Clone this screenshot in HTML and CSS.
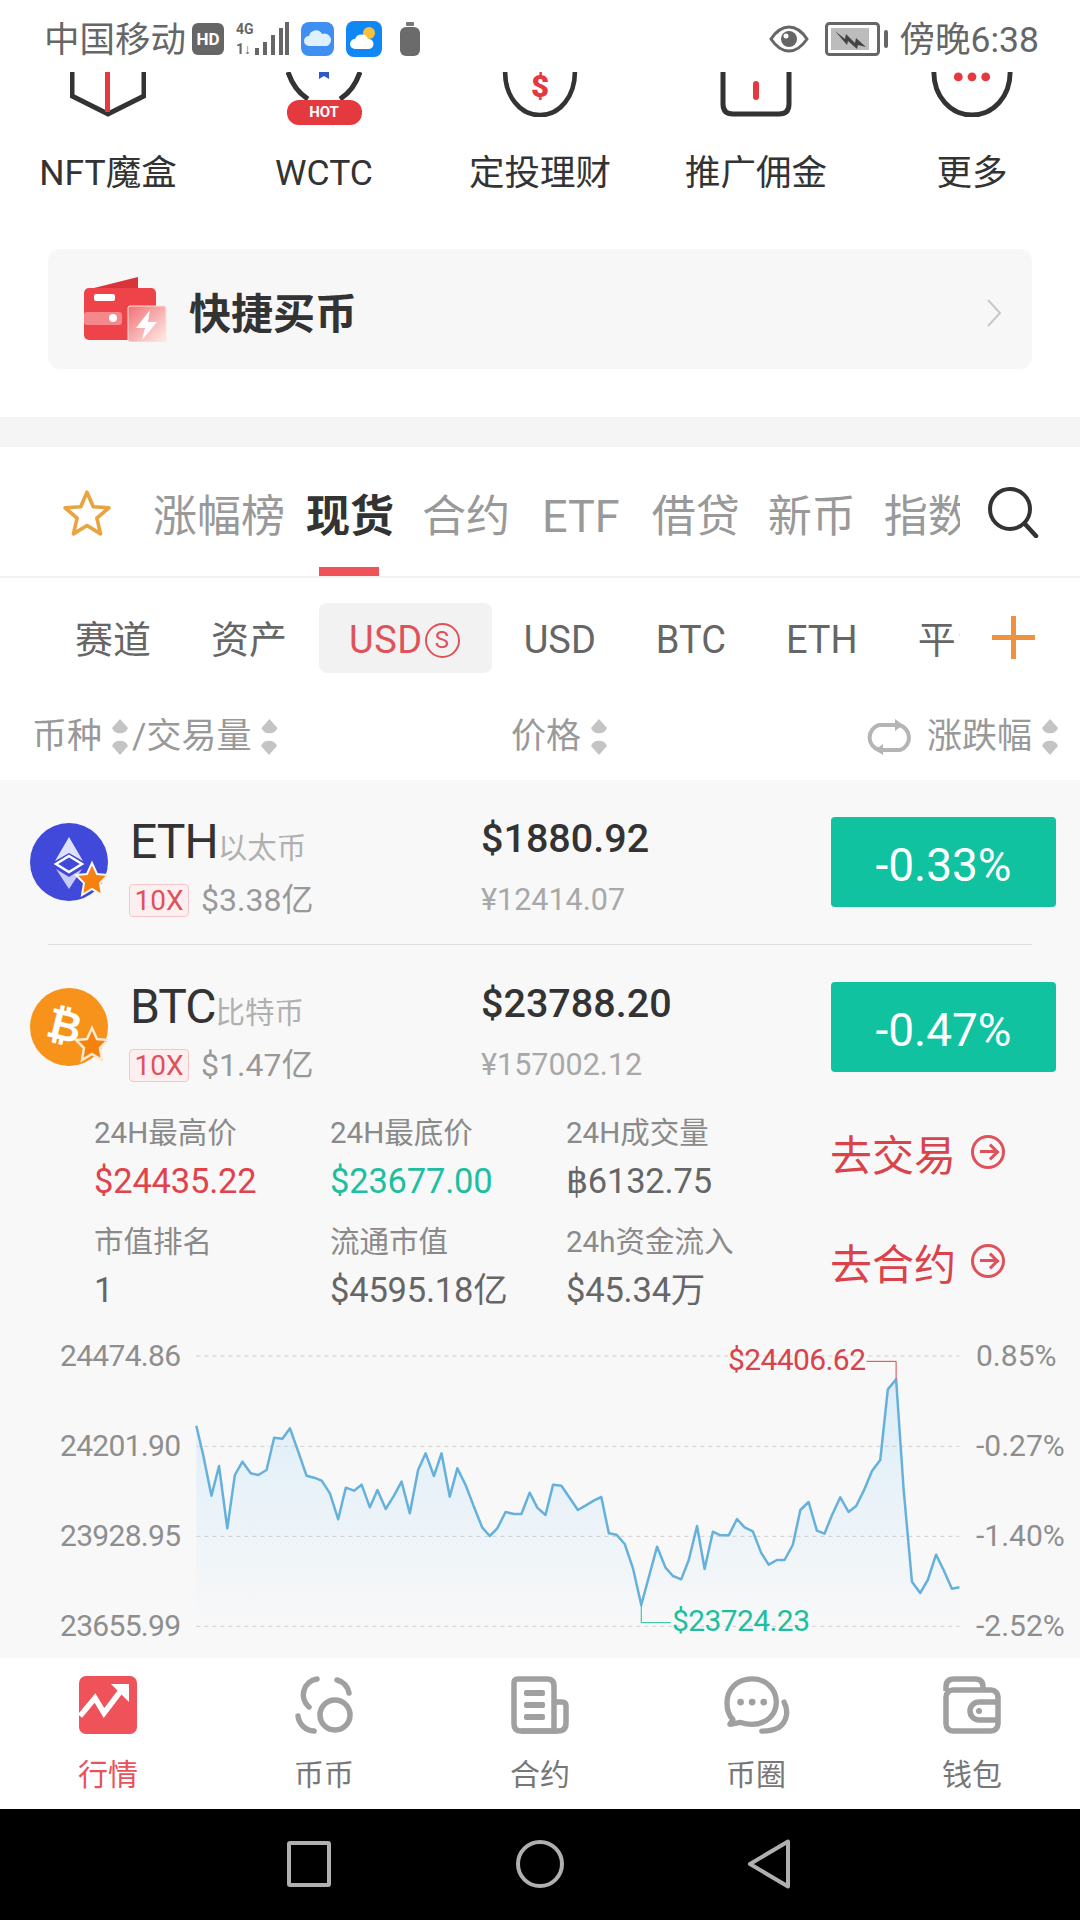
FILE: index.html
```html
<!DOCTYPE html>
<html lang="zh-CN">
<head>
  <meta charset="UTF-8" />
  <meta name="viewport" content="width=device-width, initial-scale=1.0" />
  <title>行情</title>
  <link rel="stylesheet" href="styles.css">
</head>
<body>
  <!-- Status bar -->
  <header class="statusbar">
    <div class="status-left">
      <span class="carrier">中国移动</span>
      <span class="hd">HD</span>
      <svg class="signal" width="54" height="36" viewBox="0 0 54 36">
        <text x="1" y="13" class="sig-text">4G</text>
        <text x="1" y="33" class="sig-text">1↓</text>
        <rect x="20" y="27" width="4" height="7" fill="#666"/>
        <rect x="28" y="21" width="4" height="13" fill="#666"/>
        <rect x="36" y="14" width="4" height="20" fill="#666"/>
        <rect x="44" y="7" width="4" height="27" fill="#666"/>
        <rect x="50" y="1" width="4" height="33" fill="#666"/>
      </svg>
      <svg class="app-icon" width="33" height="34" viewBox="0 0 33 34">
        <rect width="33" height="34" rx="8" fill="#3f8ff2"/>
        <path d="M8 24a5 5 0 0 1 0-10 7 7 0 0 1 13-2 6 6 0 0 1 5 12z" fill="#dff0ff"/>
      </svg>
      <svg class="app-icon" width="36" height="36" viewBox="0 0 36 36">
        <rect width="36" height="36" rx="8" fill="#0f87f5"/>
        <circle cx="23" cy="12" r="6" fill="#f7c23a"/>
        <path d="M9 28a5 5 0 0 1 0-10 7 7 0 0 1 13 0 5 5 0 0 1 1 10z" fill="#fff"/>
      </svg>
      <svg class="app-icon" width="20" height="34" viewBox="0 0 20 34">
        <rect x="6" y="0" width="8" height="4" rx="1" fill="#777"/>
        <rect x="0" y="5" width="20" height="29" rx="6" fill="#6b6b6b"/>
      </svg>
    </div>
    <div class="status-right">
      <svg width="40" height="30" viewBox="0 0 40 30">
        <path d="M2 15C8 6 14 3 20 3s12 3 18 12c-6 9-12 12-18 12S8 24 2 15z" fill="none" stroke="#666" stroke-width="3"/>
        <circle cx="20" cy="15" r="8" fill="#666"/>
        <circle cx="17" cy="12" r="2.500" fill="#fff"/>
      </svg>
      <svg width="64" height="34" viewBox="0 0 64 34">
        <rect x="1.500" y="1.500" width="52" height="31" rx="3" fill="none" stroke="#666" stroke-width="3"/>
        <rect x="6" y="6" width="38" height="22" fill="#bcbcbc"/>
        <path d="M10 9l10 8 1-5 9 9 1-5 10 9-8-2-1 4-9-8-1 4z" fill="#444"/>
        <rect x="59" y="8" width="4" height="18" rx="2" fill="#666"/>
      </svg>
      <span class="clock">傍晚6:38</span>
    </div>
  </header>

  <!-- Shortcut grid, scrolled partly under the status bar -->
  <section class="shortcuts">
    <div class="shortcut">
      <svg width="76" height="45" viewBox="0 0 76 45">
        <path d="M2 0V24L38 42 74 24V0" fill="none" stroke="#333" stroke-width="5"/>
        <rect x="35" y="0" width="5" height="40" fill="#e4393f"/>
      </svg>
      <span>NFT魔盒</span>
    </div>
    <div class="shortcut">
      <div class="wctc-icon">
        <svg width="76" height="28" viewBox="0 0 76 28">
          <path d="M2 0C6 12 14 22 22 27M74 0C70 12 62 22 54 27" fill="none" stroke="#333" stroke-width="5"/>
          <path d="M33 0H43L43 7 38 4 33 7z" fill="#2f58c9"/>
        </svg>
        <b class="hot">HOT</b>
      </div>
      <span>WCTC</span>
    </div>
    <div class="shortcut">
      <svg width="80" height="49" viewBox="0 0 80 49">
        <path d="M2 0C2 26 18 47 40 47S78 26 78 0" fill="none" stroke="#333" stroke-width="5"/>
        <text x="40" y="27" class="dollar">$</text>
      </svg>
      <span>定投理财</span>
    </div>
    <div class="shortcut">
      <svg width="72" height="45" viewBox="0 0 72 45">
        <path d="M3 0V32Q3 42 13 42H59Q69 42 69 32V0" fill="none" stroke="#333" stroke-width="5"/>
        <rect x="33" y="9" width="6" height="19" rx="3" fill="#e4393f"/>
      </svg>
      <span>推广佣金</span>
    </div>
    <div class="shortcut">
      <svg width="84" height="46" viewBox="0 0 84 46">
        <path d="M3 0C3 25 20 44 42 44S81 25 81 0" fill="none" stroke="#333" stroke-width="5"/>
        <circle cx="28" cy="5" r="4.500" fill="#e4393f"/>
        <circle cx="42" cy="5" r="4.500" fill="#e4393f"/>
        <circle cx="56" cy="5" r="4.500" fill="#e4393f"/>
      </svg>
      <span>更多</span>
    </div>
  </section>

  <!-- Quick buy card -->
  <section class="quick-wrap">
    <div class="quick-card">
      <svg width="84" height="66" viewBox="0 0 84 66">
        <defs>
          <linearGradient id="tile" x1="0" y1="0" x2="1" y2="1">
            <stop offset="0" stop-color="#f27075"/>
            <stop offset="1" stop-color="#fdeeea"/>
          </linearGradient>
        </defs>
        <path d="M2 14L54 1V14z" fill="#d9343c"/>
        <rect x="0" y="12" width="72" height="52" rx="5" fill="#ee4449"/>
        <rect x="10" y="18" width="21" height="7" rx="2" fill="#fff"/>
        <rect x="0" y="36" width="38" height="13" rx="3" fill="#f5888b"/>
        <circle cx="29" cy="42" r="4" fill="#fff"/>
        <rect x="44" y="30" width="38" height="36" rx="2" fill="url(#tile)" stroke="#fbe3d6"/>
        <path d="M66 34L52 52H61L58 64 73 46H64z" fill="#fff"/>
      </svg>
      <span class="quick-title">快捷买币</span>
      <svg class="chev" width="16" height="30" viewBox="0 0 16 30">
        <path d="M2 2L14 15 2 28" fill="none" stroke="#c8c8c8" stroke-width="2"/>
      </svg>
    </div>
  </section>

  <div class="gap-bar"></div>

  <!-- Market tabs -->
  <nav class="market-tabs">
    <svg class="tab-star" width="50" height="50" viewBox="0 0 48 48">
      <path d="M24 4l6 14 15 1-11.500 10 3.500 15-13-8-13 8 3.500-15L3 19l15-1z" fill="none" stroke="#e9a33f" stroke-width="3.500" stroke-linejoin="round"/>
    </svg>
    <div class="tab-scroll">
      <span class="tab first">涨幅榜</span>
      <span class="tab active">现货</span>
      <span class="tab">合约</span>
      <span class="tab latin">ETF</span>
      <span class="tab">借贷</span>
      <span class="tab">新币</span>
      <span class="tab">指数</span>
    </div>
    <svg class="search" width="52" height="52" viewBox="0 0 52 52">
      <circle cx="23" cy="23" r="20" fill="none" stroke="#333" stroke-width="4"/>
      <path d="M38 38l11 12" stroke="#333" stroke-width="4.500" stroke-linecap="round"/>
    </svg>
  </nav>

  <!-- Quote currency chips -->
  <div class="chips">
    <div class="chip-scroll">
      <span class="chip">赛道</span>
      <span class="chip">资产</span>
      <span class="chip selected">USD<i class="circled">S</i></span>
      <span class="chip">USD</span>
      <span class="chip">BTC</span>
      <span class="chip">ETH</span>
      <span class="chip">平台</span>
    </div>
    <span class="plus"></span>
  </div>

  <!-- Column headers -->
  <div class="col-head">
    <div class="col-a">币种<i class="sort"></i>/交易量<i class="sort"></i></div>
    <div class="col-b">价格<i class="sort"></i></div>
    <div class="col-c">
      <svg width="48" height="36" viewBox="0 0 48 36">
        <path d="M15 31H14A13 13 0 0 1 14 6H33M34 6A13 13 0 0 1 35 31H18" fill="none" stroke="#b5b5b5" stroke-width="4"/>
        <path d="M30 0l8 6-8 6zM18 25l-8 6 8 5z" fill="#b5b5b5"/>
      </svg>
      涨跌幅<i class="sort"></i>
    </div>
  </div>

  <!-- Coin list -->
  <section class="list">
    <div class="coin-row">
      <div class="coin-icon">
        <svg width="78" height="78" viewBox="0 0 78 78">
          <circle cx="39" cy="39" r="39" fill="#4049d9"/>
          <path d="M39 14L53 38 39 30 25 38z" fill="#dfe2ff"/>
          <path d="M39 33L52 41 39 49 26 41z" fill="none" stroke="#fff" stroke-width="2.500"/>
          <path d="M26 46L39 54 52 46 39 66z" fill="#c6cbfb"/>
          <path d="M62 40l5 11 11 1-8 8 2 12-10-6-10 6 2-12-8-8 11-1z" fill="#f5810f" stroke="#f8f8f8" stroke-width="2"/>
        </svg>
      </div>
      <div class="coin-name">
        <div class="sym">ETH<small>以太币</small></div>
        <div class="vol"><b class="lev">10X</b>$3.38亿</div>
      </div>
      <div class="coin-price">
        <div class="usd">$1880.92</div>
        <div class="cny">¥12414.07</div>
      </div>
      <div class="change">-0.33%</div>
    </div>

    <div class="coin-row no-line">
      <div class="coin-icon">
        <svg width="78" height="78" viewBox="0 0 78 78">
          <circle cx="39" cy="39" r="39" fill="#f7931a"/>
          <text x="34" y="52" class="btc-mark" transform="rotate(14 34 40)">₿</text>
          <path d="M62 40l5 11 11 1-8 8 2 12-10-6-10 6 2-12-8-8 11-1z" fill="#f5810f" stroke="#fde9d0" stroke-width="2.500"/>
        </svg>
      </div>
      <div class="coin-name">
        <div class="sym">BTC<small>比特币</small></div>
        <div class="vol"><b class="lev">10X</b>$1.47亿</div>
      </div>
      <div class="coin-price">
        <div class="usd">$23788.20</div>
        <div class="cny">¥157002.12</div>
      </div>
      <div class="change">-0.47%</div>
    </div>

    <!-- Expanded BTC stats -->
    <div class="stats">
      <div class="stat"><label>24H最高价</label><span class="up">$24435.22</span></div>
      <div class="stat"><label>24H最底价</label><span class="down">$23677.00</span></div>
      <div class="stat"><label>24H成交量</label><span>฿6132.75</span></div>
      <a class="go">去交易<i class="go-arrow"></i></a>
      <div class="stat"><label>市值排名</label><span>1</span></div>
      <div class="stat"><label>流通市值</label><span>$4595.18亿</span></div>
      <div class="stat"><label>24h资金流入</label><span>$45.34万</span></div>
      <a class="go">去合约<i class="go-arrow"></i></a>
    </div>

    <!-- Price chart -->
    <div class="chart">
      <svg class="chart-svg" viewBox="0 0 1568 1020" preserveAspectRatio="none">
        <defs>
          <linearGradient id="area" x1="0" y1="0" x2="0" y2="1">
            <stop offset="0" stop-color="#dcedf8"/>
            <stop offset="1" stop-color="#f8f8f8"/>
          </linearGradient>
        </defs>
        <path class="area" d="M285 287L295 375 307 497 318 408 330 595 341 435 352 395 364 430 375 435 387 420 398 323 410 326 421 295 433 365 445 437 456 443 467 452 479 490 491 568 502 473 514 482 525 464 537 532 548 480 560 537 572 497 583 455 595 550 607 420 618 370 630 438 641 370 653 500 664 415 676 465 688 530 700 592 711 618 722 595 734 546 746 552 757 552 769 488 780 533 792 555 803 464 815 467 827 503 839 540 850 527 862 512 873 501 884 610 895 614 907 642 919 715 931 825 954 650 966 712 977 738 989 748 1000 690 1012 588 1023 717 1035 605 1046 616 1058 616 1070 567 1081 592 1093 604 1105 668 1116 704 1128 690 1139 690 1151 645 1162 540 1174 516 1186 602 1197 611 1208 555 1220 502 1232 546 1243 528 1255 478 1266 423 1278 390 1289 178 1301 148 1312 480 1324 755 1336 789 1347 750 1359 674 1370 720 1382 776 1393 772V890H285z"/>
        <path class="grid" d="M285 78H1393M285 349H1393M285 619H1393M285 889H1393"/>
        <path class="line" d="M285 287L295 375 307 497 318 408 330 595 341 435 352 395 364 430 375 435 387 420 398 323 410 326 421 295 433 365 445 437 456 443 467 452 479 490 491 568 502 473 514 482 525 464 537 532 548 480 560 537 572 497 583 455 595 550 607 420 618 370 630 438 641 370 653 500 664 415 676 465 688 530 700 592 711 618 722 595 734 546 746 552 757 552 769 488 780 533 792 555 803 464 815 467 827 503 839 540 850 527 862 512 873 501 884 610 895 614 907 642 919 715 931 825 954 650 966 712 977 738 989 748 1000 690 1012 588 1023 717 1035 605 1046 616 1058 616 1070 567 1081 592 1093 604 1105 668 1116 704 1128 690 1139 690 1151 645 1162 540 1174 516 1186 602 1197 611 1208 555 1220 502 1232 546 1243 528 1255 478 1266 423 1278 390 1289 178 1301 148 1312 480 1324 755 1336 789 1347 750 1359 674 1370 720 1382 776 1393 772"/>
        <path class="lead-up" d="M1258 94H1301V148"/>
        <path class="lead-down" d="M931 825V878H974"/>
      </svg>
      <span class="y-left l1">24474.86</span>
      <span class="y-left l2">24201.90</span>
      <span class="y-left l3">23928.95</span>
      <span class="y-left l4">23655.99</span>
      <span class="y-right l1">0.85%</span>
      <span class="y-right l2">-0.27%</span>
      <span class="y-right l3">-1.40%</span>
      <span class="y-right l4">-2.52%</span>
      <span class="mark-high">$24406.62</span>
      <span class="mark-low">$23724.23</span>
    </div>
  </section>

  <!-- Bottom tabs -->
  <footer class="tabbar">
    <div class="bar-item active">
      <svg width="58" height="58" viewBox="0 0 58 58">
        <rect width="58" height="58" rx="7" fill="#f0525a"/>
        <path d="M1 40L16 22l9 15L44 12" fill="none" stroke="#fff" stroke-width="5.500"/>
        <path d="M32 8H50V26z" fill="#fff"/>
      </svg>
      <span>行情</span>
    </div>
    <div class="bar-item">
      <svg width="58" height="58" viewBox="0 0 58 58">
        <g fill="none" stroke="#a0a0a0" stroke-width="5.500" stroke-linecap="round">
          <circle cx="40" cy="39" r="15"/>
          <path d="M22 3A16 16 0 0 0 14 31M42 4A16 16 0 0 1 54 17"/>
          <path d="M3 40A17 17 0 0 0 19 55"/>
        </g>
      </svg>
      <span>币币</span>
    </div>
    <div class="bar-item">
      <svg width="58" height="58" viewBox="0 0 58 58">
        <path d="M7 3H36Q43 3 43 10V55H10Q3 55 3 48V7Q3 3 7 3z" fill="none" stroke="#a0a0a0" stroke-width="5.500"/>
        <path d="M43 26H51Q55 26 55 30V47Q55 55 47 55H10" fill="none" stroke="#a0a0a0" stroke-width="5.500"/>
        <rect x="13" y="14" width="21" height="6" rx="2" fill="#a0a0a0"/>
        <rect x="13" y="26" width="21" height="6" rx="2" fill="#a0a0a0"/>
        <rect x="13" y="38" width="21" height="6" rx="2" fill="#a0a0a0"/>
      </svg>
      <span>合约</span>
    </div>
    <div class="bar-item">
      <svg width="67" height="60" viewBox="0 0 67 60">
        <path d="M29 3C13 3 3 14 3 28c0 8 2 13 6 17l-3 5 11-2c3 1 7 2 12 2 15 0 25-10 25-23S44 3 29 3z" fill="none" stroke="#a0a0a0" stroke-width="5.500" stroke-linejoin="round"/>
        <circle cx="17" cy="27" r="3.500" fill="#a0a0a0"/>
        <circle cx="29" cy="27" r="3.500" fill="#a0a0a0"/>
        <circle cx="41" cy="27" r="3.500" fill="#a0a0a0"/>
        <path d="M62 27C67 36 65 47 57 53c-5 3-12 4-18 4" fill="none" stroke="#a0a0a0" stroke-width="5.500" stroke-linecap="round"/>
      </svg>
      <span>币圈</span>
    </div>
    <div class="bar-item">
      <svg width="58" height="58" viewBox="0 0 58 58">
        <path d="M3 15V11Q3 3 11 3H32Q40 3 40 11V13" fill="none" stroke="#a0a0a0" stroke-width="5.500"/>
        <rect x="3" y="14" width="52" height="41" rx="7" fill="none" stroke="#a0a0a0" stroke-width="5.500"/>
        <path d="M55 26H36A8 8 0 0 0 36 44H55" fill="none" stroke="#a0a0a0" stroke-width="5.500"/>
        <circle cx="36" cy="35" r="3" fill="#a0a0a0"/>
      </svg>
      <span>钱包</span>
    </div>
  </footer>

  <!-- Android nav -->
  <div class="navbar">
    <span class="nav-square"></span>
    <span class="nav-circle"></span>
    <svg width="44" height="50" viewBox="0 0 44 50">
      <path d="M41 2.500V47.500L3 25z" fill="none" stroke="#b0b0b0" stroke-width="4" stroke-linejoin="round"/>
    </svg>
  </div>
</body>
</html>
```

FILE: styles.css
```css
* {
  box-sizing: border-box;
}

html,
body {
  margin: 0;
  padding: 0;
}

body {
  width: 1080px;
  height: 1920px;
  overflow: hidden;
  background: #fff;
  color: #333;
  font-family: Roboto, "Noto Sans CJK SC", sans-serif;
  display: flex;
  flex-direction: column;
}

i {
  font-style: normal;
}

/* status bar */
.statusbar {
  height: 72px;
  flex: none;
  padding: 20px 41px 0 44px;
  display: flex;
  justify-content: space-between;
  align-items: flex-start;
  color: #666;
}

.status-left,
.status-right {
  display: flex;
  align-items: center;
  height: 38px;
}

.carrier {
  font-size: 35.500px;
  line-height: 38px;
  width: 148px;
  white-space: nowrap;
  position: relative;
  top: 1px;
}

.hd {
  width: 32px;
  height: 32px;
  border-radius: 6px;
  background: #666;
  color: #fff;
  font-size: 17px;
  font-weight: 700;
  line-height: 32px;
  text-align: center;
}

.signal {
  margin-left: 11px;
}

.sig-text {
  font-family: Roboto, sans-serif;
  font-size: 14px;
  font-weight: 700;
  fill: #666;
}

.app-icon {
  margin-left: 12px;
}

.status-left .app-icon:last-child {
  margin-left: 18px;
}

.status-right {
  gap: 14px;
}

.status-right svg:first-child {
  margin-right: 2px;
}

.clock {
  font-size: 35.500px;
  line-height: 38px;
  white-space: nowrap;
  margin-left: -3px;
  position: relative;
  top: 1px;
}

/* shortcuts */
.shortcuts {
  height: 177px;
  flex: none;
  display: grid;
  grid-template-columns: repeat(5, 216px);
}

.shortcut {
  display: flex;
  flex-direction: column;
  align-items: center;
  color: #333;
}

.shortcut svg {
  display: block;
}

.shortcut > svg {
  height: 45px;
  margin-bottom: 9px;
}

.shortcut > span {
  margin-top: 25px;
  font-size: 35.500px;
  line-height: 44px;
  white-space: nowrap;
}

.wctc-icon {
  height: 54px;
  display: flex;
  flex-direction: column;
  align-items: center;
}

.hot {
  width: 75px;
  height: 25px;
  border-radius: 12px;
  background: #e4393f;
  color: #fff;
  font-size: 15px;
  font-weight: 700;
  line-height: 25px;
  text-align: center;
}

.dollar {
  font-family: Roboto, sans-serif;
  font-size: 34px;
  font-weight: 900;
  fill: #e4393f;
  text-anchor: middle;
}

/* quick buy */
.quick-wrap {
  height: 168px;
  flex: none;
  padding: 0 48px;
}

.quick-card {
  height: 120px;
  border-radius: 12px;
  background: #f7f7f7;
  display: flex;
  align-items: center;
  padding: 0 30px 0 36px;
}

.quick-title {
  margin-left: 21px;
  font-size: 42px;
  font-weight: 700;
  color: #333;
  flex: 1;
  position: relative;
  top: 1px;
}

.chev {
  position: relative;
  top: 4px;
}

.gap-bar {
  height: 30px;
  flex: none;
  background: #f5f5f5;
}

/* market tabs */
.market-tabs {
  height: 131px;
  flex: none;
  display: flex;
  align-items: flex-start;
  border-bottom: 2px solid #f2f2f2;
  padding: 39px 0 0 62px;
}

.tab-star {
  flex: none;
  margin-top: 2px;
}

.tab-scroll {
  width: 807px;
  margin-left: 41px;
  height: 90px;
  display: flex;
  overflow: hidden;
  white-space: nowrap;
}

.tab {
  flex: none;
  font-size: 44px;
  line-height: 62px;
  color: #999;
  margin-right: 28px;
  position: relative;
  height: 90px;
}

.tab.first {
  margin-right: 21px;
}

.tab.latin {
  padding: 0 4px;
  font-size: 45px;
}

.tab.active {
  color: #333;
  font-weight: 700;
}

.tab.active::after {
  content: "";
  position: absolute;
  left: 13px;
  bottom: 0;
  width: 60px;
  height: 9px;
  background: #f0525a;
}

.search {
  flex: none;
  margin-left: 27px;
}

/* chips */
.chips {
  height: 108px;
  flex: none;
  display: flex;
  align-items: flex-start;
  padding-top: 25px;
}

.chip-scroll {
  width: 960px;
  padding-left: 45px;
  height: 70px;
  display: flex;
  overflow: hidden;
  white-space: nowrap;
}

.chip {
  flex: none;
  height: 70px;
  padding: 0 30px;
  font-size: 38px;
  line-height: 74px;
  color: #666;
}

.chip.selected {
  background: #f2f2f2;
  color: #e0525a;
  border-radius: 8px;
  display: flex;
  align-items: center;
  padding: 4px 32px 0 30px;
  margin-left: 2px;
  margin-right: 2px;
  line-height: 66px;
  letter-spacing: 0.5px;
}

.circled {
  display: inline-block;
  width: 35px;
  height: 35px;
  border: 2px solid #e0525a;
  border-radius: 50%;
  font-size: 24px;
  line-height: 31px;
  text-align: center;
  margin-left: 2px;
}

.plus {
  flex: none;
  width: 43px;
  height: 43px;
  margin: 13px 0 0 32px;
  background:
    linear-gradient(#ee9140, #ee9140) center / 100% 5px no-repeat,
    linear-gradient(#ee9140, #ee9140) center / 5px 100% no-repeat;
}

/* column header */
.col-head {
  height: 94px;
  flex: none;
  display: flex;
  align-items: flex-start;
  padding-top: 29px;
  font-size: 35px;
  line-height: 44px;
  color: #999;
}

.col-a {
  width: 511px;
  padding-left: 32px;
  display: flex;
  align-items: center;
}

.col-b {
  width: 354px;
  display: flex;
  align-items: center;
}

.col-c {
  flex: 1;
  display: flex;
  align-items: center;
  white-space: nowrap;
}

.col-c svg {
  margin-right: 14px;
}

.sort {
  flex: none;
  position: relative;
  display: inline-block;
  width: 18px;
  height: 36px;
  margin: 0 3px 0 9px;
}

.sort::before,
.sort::after {
  content: "";
  position: absolute;
  left: 0;
  width: 18px;
  height: 17px;
  background: #c4c4c4;
  clip-path: path("M9 0L17 9A8.500 8 0 0 1 1 9Z");
}

.sort::before {
  top: 0;
}

.sort::after {
  bottom: 0;
  transform: rotate(180deg);
}

/* coin list */
.list {
  height: 878px;
  flex: none;
  background: #f8f8f8;
}

.coin-row {
  position: relative;
  height: 165px;
  display: flex;
  align-items: flex-start;
  padding: 37px 24px 0 30px;
}

.coin-row::after {
  content: "";
  position: absolute;
  left: 48px;
  right: 48px;
  bottom: 0;
  height: 1px;
  background: #dedede;
}

.coin-row.no-line::after {
  display: none;
}

.coin-icon {
  flex: none;
  width: 78px;
  margin-top: 6px;
}

.coin-icon svg {
  display: block;
}

.btc-mark {
  font-family: "DejaVu Sans", sans-serif;
  font-size: 42px;
  font-weight: 700;
  fill: #fff;
  text-anchor: middle;
}

.coin-name {
  flex: none;
  width: 351px;
  margin-left: 22px;
}

.sym {
  font-size: 48px;
  line-height: 56px;
  letter-spacing: -1px;
  color: #333;
  height: 56px;
  margin-top: -3px;
}

.sym small {
  font-size: 29.500px;
  color: #b0b0b0;
  letter-spacing: 0;
}

.vol {
  display: flex;
  align-items: center;
  margin-top: 12px;
  font-size: 32px;
  line-height: 36px;
  color: #999;
}

.lev {
  width: 60px;
  height: 33px;
  margin-right: 12px;
  margin-left: -1px;
  border: 1px solid #f6c5c8;
  border-radius: 4px;
  background: #fdeff0;
  color: #e0525a;
  font-size: 28px;
  font-weight: 400;
  line-height: 31px;
  text-align: center;
}

.coin-price {
  flex: 1;
}

.usd {
  font-size: 39.500px;
  font-weight: 500;
  line-height: 56px;
  margin-top: -6px;
}

.cny {
  margin-top: 15px;
  font-size: 30.500px;
  line-height: 36px;
  color: #a8a8a8;
}

.change {
  flex: none;
  width: 225px;
  height: 90px;
  border-radius: 4px;
  background: #10c29f;
  color: #fff;
  font-size: 46px;
  line-height: 97px;
  text-align: center;
}

/* stats */
.stats {
  height: 220px;
  display: grid;
  grid-template-columns: 236px 236px 264px 1fr;
  grid-template-rows: 109px 109px;
  padding: 4px 0 0 94px;
}

.stat {
  display: flex;
  flex-direction: column;
  white-space: nowrap;
}

.stat label {
  font-size: 29.500px;
  line-height: 38px;
  color: #8a8a8a;
}

.stat span {
  margin-top: 7px;
  font-size: 34.500px;
  line-height: 44px;
  color: #666;
  letter-spacing: -0.2px;
}

.stat span.up {
  color: #e0434b;
}

.stat span.down {
  color: #1dbf9f;
}

.go {
  display: flex;
  align-items: center;
  height: 60px;
  margin-top: 8px;
  font-size: 42px;
  color: #d9434b;
  white-space: nowrap;
}

.go-arrow {
  position: relative;
  flex: none;
  width: 34px;
  height: 34px;
  margin-left: 15px;
  border: 3px solid #e0525a;
  border-radius: 50%;
}

.go-arrow::before {
  content: "";
  position: absolute;
  left: 6px;
  top: 12px;
  width: 15px;
  height: 3px;
  background: #e0525a;
}

.go-arrow::after {
  content: "";
  position: absolute;
  left: 11px;
  top: 8px;
  width: 9px;
  height: 9px;
  border-top: 3px solid #e0525a;
  border-right: 3px solid #e0525a;
  transform: rotate(45deg);
}

/* chart */
.chart {
  position: relative;
  height: 328px;
  font-size: 30px;
  line-height: 36px;
  color: #8e8e8e;
}

.chart-svg {
  position: absolute;
  left: 0;
  top: 0;
  width: 1080px;
  height: 340px;
}

.chart-svg path {
  vector-effect: non-scaling-stroke;
  fill: none;
}

.chart-svg .area {
  fill: url(#area);
  stroke: none;
}

.chart-svg .grid {
  stroke: #cfcfcf;
  stroke-width: 1;
  stroke-dasharray: 4 4;
}

.chart-svg .line {
  stroke: #66b1dc;
  stroke-width: 2.500;
  stroke-linejoin: round;
}

.lead-up {
  stroke: #d9434b;
  stroke-width: 1;
}

.lead-down {
  stroke: #1dbf9f;
  stroke-width: 1;
}

.y-left,
.y-right,
.mark-high,
.mark-low {
  position: absolute;
  white-space: nowrap;
}

.y-left {
  left: 60px;
  letter-spacing: -0.7px;
}

.y-right {
  left: 976px;
}

.l1 {
  top: 8px;
}

.l2 {
  top: 98px;
}

.l3 {
  top: 188px;
}

.l4 {
  top: 278px;
}

.mark-high {
  left: 728px;
  top: 12px;
  color: #d9434b;
  letter-spacing: -0.6px;
}

.mark-low {
  left: 672px;
  top: 273px;
  color: #1dbf9f;
  letter-spacing: -0.6px;
}

/* bottom bar */
.tabbar {
  height: 151px;
  flex: none;
  background: #fff;
  display: grid;
  grid-template-columns: repeat(5, 216px);
  padding-top: 18px;
}

.bar-item {
  display: flex;
  flex-direction: column;
  align-items: center;
  color: #777;
}

.bar-item svg {
  display: block;
  height: 58px;
}

.bar-item span {
  margin-top: 23px;
  font-size: 30px;
  line-height: 36px;
}

.bar-item.active span {
  color: #e8525a;
}

/* system nav */
.navbar {
  height: 111px;
  flex: none;
  background: #000;
  display: flex;
  align-items: center;
  padding: 0 0 2px 287px;
}

.nav-square {
  width: 44px;
  height: 46px;
  border: 4px solid #b0b0b0;
  border-radius: 3px;
}

.nav-circle {
  width: 48px;
  height: 48px;
  margin: 0 183px 0 185px;
  border: 4px solid #b0b0b0;
  border-radius: 50%;
}
```
